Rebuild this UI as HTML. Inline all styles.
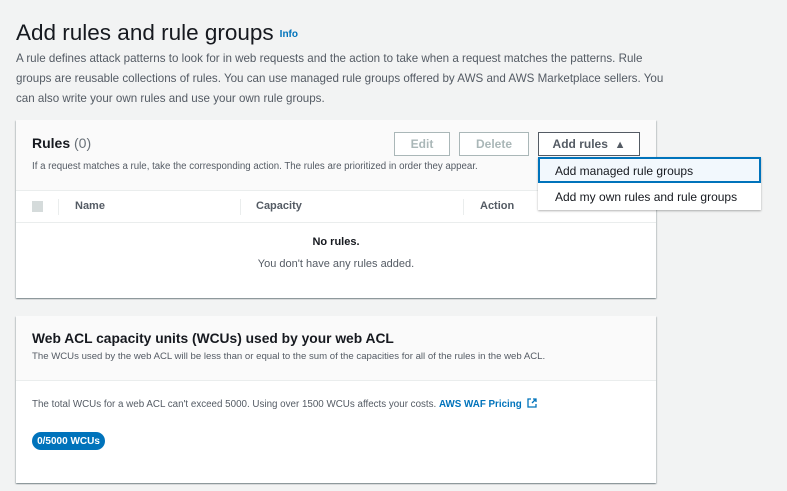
<!DOCTYPE html>
<html><head><style>
body{margin:0;background:#f2f3f3;font-family:"Liberation Sans",Arial,sans-serif;color:#16191f;width:787px;height:491px;overflow:hidden;position:relative}
.a{position:absolute}
h1{position:absolute;left:16px;top:20px;margin:0;font-size:22.5px;font-weight:normal;color:#16191f;white-space:nowrap}
.info{font-size:10px;color:#0073bb;font-weight:bold;vertical-align:middle;margin-left:6px}
.desc{left:16px;top:49px;width:650px;font-size:11.6px;line-height:20px;color:#545b64}
.panel{background:#fff;box-shadow:0 1px 1px rgba(0,28,36,.3),1px 1px 1px rgba(0,28,36,.15),-1px 1px 1px rgba(0,28,36,.15)}
.btn{border:1px solid #aab7b8;background:#fff;font-size:12px;font-weight:bold;color:#aab7b8;text-align:center;line-height:22px;box-sizing:border-box;height:24px}
</style></head><body>
<h1>Add rules and rule groups<span class="info">Info</span></h1>
<div class="a desc">A rule defines attack patterns to look for in web requests and the action to take when a request matches the patterns. Rule groups are reusable collections of rules. You can use managed rule groups offered by AWS and AWS Marketplace sellers. You can also write your own rules and use your own rule groups.</div>

<div class="a panel" style="left:16px;top:120px;width:640px;height:178px">
 <div class="a" style="left:0;top:0;width:640px;height:70px;background:#fafafa;border-bottom:1px solid #eaeded"></div>
 <div class="a" style="left:16px;top:15px;font-size:14px;font-weight:bold">Rules <span style="font-weight:normal;color:#687078">(0)</span></div>
 <div class="a" style="left:16px;top:41px;font-size:9.7px;color:#545b64">If a request matches a rule, take the corresponding action. The rules are prioritized in order they appear.</div>
 <div class="a btn" style="left:378px;top:12px;width:56px">Edit</div>
 <div class="a btn" style="left:443px;top:12px;width:70px">Delete</div>
 <div class="a btn" style="left:522px;top:12px;width:102px;border-color:#545b64;color:#545b64">Add rules &nbsp;<span style="font-size:11px">▲</span></div>
 <div class="a" style="left:0;top:71px;width:640px;height:31px;border-bottom:1px solid #eaeded"></div>
 <div class="a" style="left:16px;top:81px;width:11px;height:11px;background:#d5dbdb"></div>
 <div class="a" style="left:42px;top:79px;width:1px;height:16px;background:#eaeded"></div>
 <div class="a" style="left:224px;top:79px;width:1px;height:16px;background:#eaeded"></div>
 <div class="a" style="left:447px;top:79px;width:1px;height:16px;background:#eaeded"></div>
 <div class="a" style="left:59px;top:80px;font-size:11px;font-weight:bold;color:#545b64">Name</div>
 <div class="a" style="left:240px;top:80px;font-size:11px;font-weight:bold;color:#545b64">Capacity</div>
 <div class="a" style="left:464px;top:80px;font-size:11px;font-weight:bold;color:#545b64">Action</div>
 <div class="a" style="left:0;top:116px;width:640px;text-align:center;font-size:11px;font-weight:bold">No rules.</div>
 <div class="a" style="left:0;top:138px;width:640px;text-align:center;font-size:11px;color:#545b64">You don't have any rules added.</div>
</div>

<div class="a" style="left:538px;top:157px;width:223px;height:53px;background:#fff;box-shadow:0 1px 2px rgba(0,0,0,.3)">
 <div class="a" style="left:0;top:0;width:223px;height:26px;box-sizing:border-box;border:2px solid #0073bb;background:#f2f8fd"></div>
 <div class="a" style="left:17px;top:7px;font-size:12px">Add managed rule groups</div>
 <div class="a" style="left:17px;top:33px;font-size:12px">Add my own rules and rule groups</div>
</div>

<div class="a panel" style="left:16px;top:316px;width:640px;height:167px">
 <div class="a" style="left:0;top:0;width:640px;height:64px;background:#fafafa;border-bottom:1px solid #eaeded"></div>
 <div class="a" style="left:16px;top:15px;font-size:13.8px;font-weight:bold">Web ACL capacity units (WCUs) used by your web ACL</div>
 <div class="a" style="left:16px;top:35px;font-size:9.6px;color:#545b64">The WCUs used by the web ACL will be less than or equal to the sum of the capacities for all of the rules in the web ACL.</div>
 <div class="a" style="left:16px;top:82px;font-size:9.8px;color:#545b64">The total WCUs for a web ACL can't exceed 5000. Using over 1500 WCUs affects your costs. <b style="color:#0073bb">AWS WAF Pricing</b>
 <svg width="10" height="10" viewBox="0 0 10 10" style="vertical-align:-1px;margin-left:3px"><path d="M4 1H1v8h8V6M5 5l4-4M6 1h3v3" fill="none" stroke="#0073bb" stroke-width="1.3"/></svg></div>
 <div class="a" style="left:16px;top:116px;width:73px;height:18px;border-radius:9px;background:#0073bb;color:#fff;font-size:10px;font-weight:bold;display:flex;align-items:center;justify-content:center">0/5000 WCUs</div>
</div>
</body></html>
